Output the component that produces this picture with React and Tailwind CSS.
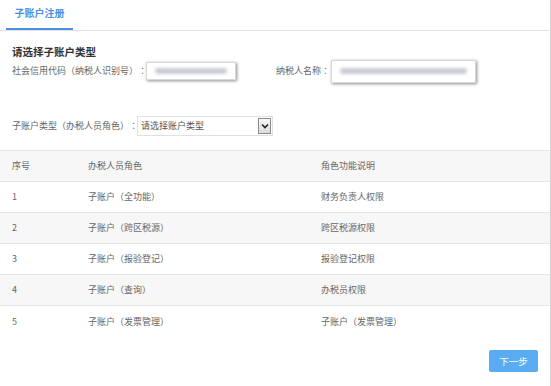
const FONT = "font-['Microsoft_YaHei','Noto_Sans_CJK_SC',sans-serif] [text-spacing-trim:space-all]";

const ROWS = [
  { no: 1, role: '子账户（全功能）', desc: '财务负责人权限' },
  { no: 2, role: '子账户（跨区税源）', desc: '跨区税源权限' },
  { no: 3, role: '子账户（报验登记）', desc: '报验登记权限' },
  { no: 4, role: '子账户（查询）', desc: '办税员权限' },
  { no: 5, role: '子账户（发票管理）', desc: '子账户（发票管理）' },
];

// full-width punctuation sits centred in the reference, as in TC fonts
function T({ children }) {
  return children.split(/([（）：])/).map((part, i) =>
    /^[（）：]$/.test(part) ? (
      <span key={i} className="font-['Noto_Sans_CJK_TC',sans-serif]">{part}</span>
    ) : (
      part
    )
  );
}

function BlurField({ className }) {
  return (
    <div className={`flex items-center bg-white shadow-[1px_1px_3px_rgba(0,0,0,0.45)] border border-[#d8d8d8] px-2 ${className}`}>
      <div className="h-[6px] w-full rounded bg-[#c9ccd6] blur-[1.5px]" />
    </div>
  );
}

export default function App() {
  return (
    <div className={`w-[551px] h-[386px] bg-white border-r border-[#d4d4d4] text-[#666] ${FONT} overflow-hidden`}>
      {/* tab bar */}
      <div className="h-[31px] border-b border-[#e3e3e3] pl-[6px] flex">
        <div className="h-full w-[67px] border-b-2 border-[#4a90e2] -mb-px flex items-center justify-center pb-[3px]">
          <span className="text-[10px] font-bold text-[#4a90e2]">子账户注册</span>
        </div>
      </div>

      {/* heading & taxpayer info */}
      <div className="px-[12px] pt-[14px]">
        <div className="text-[10.5px] font-bold text-[#333] leading-[14px]">请选择子账户类型</div>
        <div className="flex items-center mt-[1px] text-[9px] h-[22px]">
          <span className="w-[134px] whitespace-nowrap"><T>社会信用代码（纳税人识别号）：</T></span>
          <BlurField className="w-[90px] h-[18px]" />
          <span className="ml-[40px] w-[55px] whitespace-nowrap"><T>纳税人名称：</T></span>
          <BlurField className="w-[145px] h-[23px]" />
        </div>
      </div>

      {/* account type select */}
      <div className="flex items-center px-[12px] mt-[34px] h-[20px] text-[9px]">
        <span className="w-[125px] whitespace-nowrap"><T>子账户类型（办税人员角色）：</T></span>
        <div className="w-[136px] h-[20px] border border-[#e0e0e0] bg-white flex items-center justify-between pl-[3px] pr-[1px]">
          <span className="text-[9px] text-[#555]">请选择账户类型</span>
          <div className="w-[13px] h-[16px] border border-[#8a8a8a] bg-gradient-to-b from-[#f7f7f7] to-[#dcdcdc] flex items-center justify-center">
            <svg width="8" height="6" viewBox="0 0 8 6">
              <path d="M1 1.5 L4 4.5 L7 1.5" fill="none" stroke="#222" strokeWidth="1.6" />
            </svg>
          </div>
        </div>
      </div>

      {/* table */}
      <div className="mt-[14px] border-t border-[#e6e6e6] text-[9px]">
        <div className="h-[31px] flex items-center bg-[#f7f7f7] border-b border-[#e6e6e6]">
          <span className="w-[88px] pl-[12px]">序号</span>
          <span className="w-[233px]">办税人员角色</span>
          <span>角色功能说明</span>
        </div>
        {ROWS.map((r, i) => (
          <div
            key={r.no}
            className={`h-[31px] flex items-center ${i % 2 ? 'bg-[#f7f7f7]' : 'bg-white'} ${i < ROWS.length - 1 ? 'border-b border-[#e6e6e6]' : ''}`}
          >
            <span className="w-[88px] pl-[12px]">{r.no}</span>
            <span className="w-[233px]"><T>{r.role}</T></span>
            <span><T>{r.desc}</T></span>
          </div>
        ))}
      </div>

      {/* footer */}
      <div className="flex justify-end pr-[12px] mt-[13px]">
        <button className="w-[49px] h-[22px] bg-[#5aacf2] text-white text-[9.5px] rounded-[2px]">下一步</button>
      </div>
    </div>
  );
}
